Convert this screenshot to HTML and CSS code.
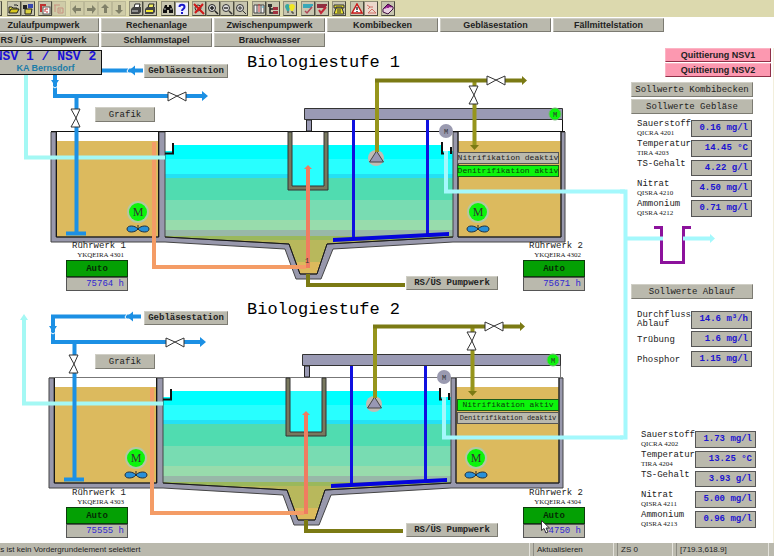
FILE: index.html
```html
<!DOCTYPE html>
<html lang="de">
<head>
<meta charset="utf-8">
<title>KA Bernsdorf – Biologie</title>
<link rel="stylesheet" href="styles.css">
</head>
<body>
<header class="toolbar">
  <div class="group"><button class="tool" aria-label="Neu"></button></div>
  <div class="group">
    <button class="tool" aria-label="Öffnen"><svg viewBox="0 0 12 12"><path d="M1 10V4h3l1 1h4v2" fill="#e8e040" stroke="#222"/><path d="M1 10l2-4h8l-2 4z" fill="#d8c820" stroke="#222"/><path d="M6 2h3l1 1" fill="none" stroke="#222"/></svg></button>
    <button class="tool" aria-label="Bild wählen"><svg viewBox="0 0 12 12"><rect x="1" y="2" width="4" height="4" fill="#222"/><rect x="6" y="1" width="5" height="4" fill="#3848b0"/><path d="M3 6h7l-1 5H3z" fill="#d8d040" stroke="#222"/></svg></button>
  </div>
  <div class="group">
    <button class="tool" aria-label="Ebene"><svg viewBox="0 0 12 12"><path d="M1 1h6v2H3v6H1z" fill="#c03030"/><rect x="4" y="4" width="7" height="7" fill="#fff" stroke="#555"/><path d="M6 9V6h3M8 10V8" fill="none" stroke="#c03030"/></svg></button>
    <button class="tool flat" aria-label="Ebene zurück"><svg viewBox="0 0 12 12"><path d="M1 2h6M2 2v7M5 5h5v5H5zM7 6v3" fill="none" stroke="#c89080"/></svg></button>
  </div>
  <div class="group">
    <button class="tool flat" aria-label="Links"><svg viewBox="0 0 12 12"><path d="M1 6l4-4v3h5v3H5v3z" fill="#808068"/></svg></button>
    <button class="tool flat" aria-label="Rechts"><svg viewBox="0 0 12 12"><path d="M11 6L7 2v3H2v3h5v3z" fill="#808068"/></svg></button>
    <button class="tool flat" aria-label="Hoch"><svg viewBox="0 0 12 12"><path d="M6 1l4 4H8v5H5V5H2z" fill="#808068"/></svg></button>
    <button class="tool flat" aria-label="Runter"><svg viewBox="0 0 12 12"><path d="M6 11l4-4H8V2H5v5H2z" fill="#808068"/></svg></button>
  </div>
  <div class="group">
    <button class="tool" aria-label="Drucken"><svg viewBox="0 0 12 12"><path d="M4 5l1-4h5L9 5z" fill="#fff" stroke="#222"/><path d="M1 6l2-2h8v5l-2 2H1z" fill="#444"/><path d="M2 8h6" stroke="#ddd"/></svg></button>
    <button class="tool" aria-label="Farbdruck"><svg viewBox="0 0 12 12"><path d="M4 5l1-4h5L9 5z" fill="#f4f060" stroke="#222"/><path d="M1 6l2-2h8v5l-2 2H1z" fill="#444"/><path d="M2 8h7" stroke="#f0e830" stroke-width="2"/></svg></button>
  </div>
  <div class="group">
    <button class="tool" aria-label="Suchen"><svg viewBox="0 0 12 12"><path d="M3 2h2v2h2V2h2l2 5v3H7V7H5v3H1V7z" fill="#111"/><path d="M3 5v2M9 5v2" stroke="#ccc"/></svg></button>
    <button class="tool" aria-label="Hilfe"><svg viewBox="0 0 12 12"><path d="M0 0h12v12H0z" fill="#eef"/><path d="M3.500 4c0-3 5-3 5 0 0 2-2.500 2-2.500 4M6 9v2" fill="none" stroke="#1818c8" stroke-width="2"/></svg></button>
  </div>
  <div class="group">
    <button class="tool" aria-label="Zoom aus"><svg viewBox="0 0 12 12"><circle cx="5" cy="5" r="3" fill="none" stroke="#333"/><path d="M1 1l10 10M10 1L2 10" stroke="#d01818" stroke-width="2"/></svg></button>
    <button class="tool" aria-label="Vergrößern"><svg viewBox="0 0 12 12"><circle cx="5" cy="5" r="3.500" fill="#ddd" stroke="#222"/><path d="M3 5h4M5 3v4M8 8l3 3" stroke="#222" stroke-width="1.500"/></svg></button>
    <button class="tool" aria-label="Verkleinern"><svg viewBox="0 0 12 12"><circle cx="5" cy="5" r="3.500" fill="#ddd" stroke="#333"/><path d="M3 5h4M8 8l3 3" stroke="#333" stroke-width="1.500"/></svg></button>
    <button class="tool" aria-label="Einpassen"><svg viewBox="0 0 12 12"><circle cx="5" cy="5" r="3.500" fill="#ddd" stroke="#333"/><path d="M4 4h2v2H4zM8 8l3 3" fill="none" stroke="#333"/></svg></button>
  </div>
  <div class="group">
    <button class="tool" aria-label="Fenster"><svg viewBox="0 0 12 12"><path d="M1 2h10v8H1zM4 2v8M8 2v8" fill="#f4f4f4" stroke="#444"/><path d="M6 1v8" stroke="#c03030"/><path d="M9 4h2" stroke="#38a0b0"/></svg></button>
    <button class="tool" aria-label="Baum"><svg viewBox="0 0 12 12"><path d="M3 1v9h4M3 6h4" fill="none" stroke="#222" stroke-width="1.500"/><path d="M1 1h4v3H1z" fill="#333"/><path d="M6 4h5v3H6zM6 8h5v3H6z" fill="#a03040"/></svg></button>
  </div>
  <div class="group">
    <button class="tool" aria-label="Lampen"><svg viewBox="0 0 12 12"><path d="M1 4c0-4 5-4 5 0L5 8H3z" fill="#38a8a0"/><path d="M5 4c0-4 6-4 6 0L9 8H7z" fill="#f0e820"/><path d="M3 9h2M7 9h2v2" stroke="#333" fill="none"/></svg></button>
  </div>
  <div class="group">
    <button class="tool" aria-label="Liste prüfen"><svg viewBox="0 0 12 12"><path d="M1 2h10M1 4h9" stroke="#38a8b8" stroke-width="2"/><path d="M3 8l2 2 5-6" fill="none" stroke="#b04858" stroke-width="1.500"/></svg></button>
    <button class="tool" aria-label="Alarm quittieren"><svg viewBox="0 0 12 12"><path d="M1 2h10M1 4h9" stroke="#903040" stroke-width="2"/><path d="M3 7l2 3 5-6" fill="none" stroke="#c02838" stroke-width="2"/></svg></button>
  </div>
  <div class="group">
    <button class="tool" aria-label="Telefon"><svg viewBox="0 0 12 12"><path d="M1 2h10v3H9V4H3v1H1z" fill="#e8e030" stroke="#333"/><path d="M3 5h6l2 6H1z" fill="#e8e030" stroke="#333"/><path d="M4 7h4M4 9h4" stroke="#333"/></svg></button>
  </div>
  <div class="group">
    <button class="tool" aria-label="Warnung"><svg viewBox="0 0 12 12"><path d="M6 1l5 9H1z" fill="#fff" stroke="#c81818" stroke-width="1.500"/><path d="M6 4v3M6 8v1" stroke="#333" stroke-width="1.500"/></svg></button>
    <button class="tool pale" aria-label="Kurve"><svg viewBox="0 0 12 12"><path d="M2 2l3 2-2 2M5 4h3M3 10l4-4 4 4z" fill="none" stroke="#d07068"/></svg></button>
  </div>
  <div class="group">
    <button class="tool" aria-label="Handbuch"><svg viewBox="0 0 12 12"><path d="M1 6l5-5 5 3-5 6z" fill="#90208c" stroke="#401040"/><path d="M1 6v3l5 2 5-5V4" fill="#e8d0e0" stroke="#401040"/><path d="M4 5l3 1 1-2" stroke="#f0c0e0" fill="none"/></svg></button>
  </div>
</header>

<nav class="areas">
  <button>Zulaufpumpwerk</button>
  <button>Rechenanlage</button>
  <button>Zwischenpumpwerk</button>
  <button>Kombibecken</button>
  <button>Gebläsestation</button>
  <button>Fällmittelstation</button>
  <button>RS / ÜS - Pumpwerk</button>
  <button>Schlammstapel</button>
  <button>Brauchwasser</button>
</nav>

<main class="plant">
  <svg class="piping" width="630" height="495" viewBox="0 48 630 495" aria-hidden="true">
    <defs>
      <clipPath id="basin"><path d="M165 151h8v-6h269v6h11v86l-126 7-10 30h-17l-11-30-124-7z"/></clipPath>
      <g id="valve"><path d="M-9-4v9L0 0zM9-4v9L0 0z" fill="#fff" stroke="#333"/></g>
      <g id="mixer">
        <circle r="11" fill="#b4c8a0"/><circle r="9" fill="#0cf40c"/>
        <text y="4" class="motor-big">M</text>
        <path d="M0 13v4" stroke="#222"/>
        <path d="M0 17c-3-4-11-4-11 0s8 4 11 0c3-4 11-4 11 0s-8 4-11 0z" fill="#2890d8" stroke="#1c3040"/>
      </g>
      <g id="stage">
        <path d="M57 141h102v96H57zM458 141h103v96H458z" fill="#dcba5e"/>
        <g clip-path="url(#basin)">
          <path d="M160 145h300v14H160z" fill="#00ffff"/>
          <path d="M160 159h300v16H160z" fill="#28ffff"/>
          <path d="M160 174h300v4H160z" fill="#24e0f4"/>
          <path d="M160 178h300v22H160z" fill="#50dcb0"/>
          <path d="M160 200h300v20H160z" fill="#78dcb2"/>
          <path d="M160 220h300v10H160z" fill="#98dcac"/>
          <path d="M160 230h300v6H160z" fill="#98b8a8"/>
          <path d="M160 236h300v4H160z" fill="#9ab85c"/>
          <path d="M160 240h300v22H160z" fill="#b8b85c"/>
          <path d="M160 262h300v14H160z" fill="#dcba5c"/>
        </g>
        <!-- concrete -->
        <path d="M51 132h5v105h103V132h6v105l124 7 11 30h17l10-30 126-7V132h5v105h103V132h4v110H453l-120 7-12 30h-25l-11-30-120-7H51z" fill="#9898ac" stroke="#444"/>
        <path d="M56.500 132v105h102V132M165 237l124 7 11 30h17l10-30 126-7M458 132v105h103V132" fill="none" stroke="#181818"/>
        <path d="M51 131.500h514" stroke="currentColor"/>
        <path d="M165 153.500h8V143M442 142v11.500h3M451 147v7" fill="none" stroke="#111" stroke-width="2"/>
        <!-- inlet shaft -->
        <path d="M292 132h32v13h-32z" fill="#fff"/><path d="M292 145h32v41h-32z" fill="#28ffff"/>
        <path d="M288 132v58h40v-58h-4v54h-32v-54z" fill="#78785e" stroke="#333"/>
        <!-- scraper bridge -->
        <path d="M306.500 120h5v11h-5z" fill="#9a9ab4" stroke="#222"/><path d="M562.500 119v13" stroke="currentColor"/>
        <path d="M304.500 108.500h258v11h-258z" fill="#9a9ab4" stroke="#333"/>
        <path d="M353.500 120v118M427.500 120v115" stroke="#1010e0" stroke-width="3"/>
        <path d="M333 238l20-1 96-5v4l-96 5-20 1z" fill="#0404dc"/>
        <circle cx="555" cy="114" r="6" fill="#0cf40c" stroke="#70b870"/><text x="555" y="117" class="motor">M</text>
        <circle cx="446" cy="131" r="7" fill="#9a9ab0"/><text x="446" y="134" class="motor">M</text>
        <!-- sludge -->
        <path d="M154 142v125h152" fill="none" stroke="#f49c66" stroke-width="4"/>
        <path d="M308 268v-99" stroke="#f07c60" stroke-width="4"/><path d="M304 169l4-4 4 4z" fill="#f07c60"/>
        <path d="M308 274v11h97" fill="none" stroke="#7b7a14" stroke-width="4"/>
        <!-- drain lines -->
        <path d="M165 157.500H26V74" fill="none" stroke="#a4f8f4" stroke-width="4"/><path d="M22 74l4-6 4 6z" fill="#a4f8f4"/>
        <path d="M446 151v40.500h179" fill="none" stroke="#a4f8fc" stroke-width="4"/>
        <!-- surplus air -->
        <circle cx="376" cy="158" r="8" fill="#c0bcb4"/><path d="M376.500 151l-7 11h14z" fill="#9898b4" stroke="#444"/>
        <path d="M377 80v72M474.500 80v66" stroke="#96951c" stroke-width="4"/><path d="M375 80.500h147" stroke="#7b7a14" stroke-width="4"/>
        <path d="M522 76l5 4.500-5 4.500zM470 145h9l-4.500 5z" fill="#7b7a14"/>
        <path d="M487 78h18v5h-18zM472 86h5v18h-5z" fill="#fff"/>
        <use href="#valve" x="496" y="80"/><use href="#valve" transform="translate(474 95) rotate(90)"/>
        <!-- process air -->
        <path d="M143 70.500H55V96h148M76.500 96v137" fill="none" stroke="#1c90e4" stroke-width="4"/>
        <path d="M66 231.500h20v4H66zM129 70.500l6-5v10zM51 80h8l-4 6zM202 91l6 5-6 5z" fill="#1c90e4"/>
        <path d="M129 68l-2 3 2 3M52 86l3 2 3-2" fill="none" stroke="#fff"/>
        <path d="M168 93h17v6h-17zM74 109h6v17h-6z" fill="#fff"/>
        <use href="#valve" x="177" y="96"/><use href="#valve" transform="translate(76 118) rotate(90)"/>
        <use href="#mixer" x="138" y="212"/><use href="#mixer" x="478" y="212"/>
      </g>
    </defs>
    <use href="#stage" class="first"/>
    <use href="#stage" class="second" transform="translate(-2 246)"/>
    <text x="307" y="263" class="motor">1</text>
    <path d="M654 227.500h7.500v35h22v-35h7.500" fill="none" stroke="#8c129c" stroke-width="3"/>
    <path d="M620 437.500h5.500v-246H620M625 238.500h38M683 238.500h28" fill="none" stroke="#a4f8fc" stroke-width="4"/>
    <path d="M710 234l5 4.500-5 4.500z" fill="#a4f8fc"/>
  </svg>

  <div class="stages">
    <section class="stage">
      <button class="home"><strong>NSV 1 / NSV 2</strong><span>KA Bernsdorf</span></button>
      <h1>Biologiestufe 1</h1>
      <button class="key bold blower">Gebläsestation</button>
      <button class="key chart">Grafik</button>
      <div class="modes"><span class="mode">Nitrifikation deaktiv</span><span class="mode on">Denitrifikation aktiv</span></div>
      <div class="drive left"><span class="name">Rührwerk 1</span><span class="tag">YKQEIRA 4301</span><button>Auto</button><output>75764 h</output></div>
      <div class="drive right"><span class="name">Rührwerk 2</span><span class="tag">YKQEIRA 4302</span><button>Auto</button><output>75671 h</output></div>
      <button class="key bold pump">RS/ÜS Pumpwerk</button>
    </section>
    <section class="stage">
      <h1>Biologiestufe 2</h1>
      <button class="key bold blower">Gebläsestation</button>
      <button class="key chart">Grafik</button>
      <div class="modes"><span class="mode on">Nitrifikation aktiv</span><span class="mode long">Denitrifikation deaktiv</span></div>
      <div class="drive left"><span class="name">Rührwerk 1</span><span class="tag">YKQEIRA 4303</span><button>Auto</button><output>75555 h</output></div>
      <div class="drive right"><span class="name">Rührwerk 2</span><span class="tag">YKQEIRA 4304</span><button>Auto</button><output>74750 h</output></div>
      <button class="key bold pump">RS/ÜS Pumpwerk</button>
      <svg class="pointer" width="9" height="14" viewBox="0 0 9 14" aria-hidden="true"><path d="M.5.500v10l2.500-2 2 4.500 2-1-2-4h3.500z" fill="#fff" stroke="#333"/></svg>
    </section>
  </div>

  <aside class="panel">
    <div class="acks"><button>Quittierung NSV1</button><button>Quittierung NSV2</button></div>
    <div class="setpoints"><button class="key">Sollwerte Kombibecken</button><button class="key">Sollwerte Gebläse</button></div>
    <dl class="readings">
      <div><dt>Sauerstoff<small>QICRA 4201</small></dt><dd>0.16 mg/l</dd></div>
      <div><dt>Temperatur<small>TIRA 4203</small></dt><dd>14.45 °C</dd></div>
      <div><dt>TS-Gehalt</dt><dd>4.22 g/l</dd></div>
      <div><dt>Nitrat<small>QISRA 4210</small></dt><dd>4.50 mg/l</dd></div>
      <div><dt>Ammonium<small>QISRA 4212</small></dt><dd>0.71 mg/l</dd></div>
    </dl>
    <div class="setpoints outlet"><button class="key">Sollwerte Ablauf</button></div>
    <dl class="readings flow">
      <div><dt>Durchfluss<br>Ablauf</dt><dd>14.6 m³/h</dd></div>
      <div class="low"><dt>Trübung</dt><dd>1.6 mg/l</dd></div>
      <div class="low"><dt>Phosphor</dt><dd>1.15 mg/l</dd></div>
    </dl>
    <dl class="readings second-stage">
      <div><dt>Sauerstoff<small>QICRA 4202</small></dt><dd>1.73 mg/l</dd></div>
      <div><dt>Temperatur<small>TIRA 4204</small></dt><dd>13.25 °C</dd></div>
      <div><dt>TS-Gehalt</dt><dd>3.93 g/l</dd></div>
      <div><dt>Nitrat<small>QISRA 4211</small></dt><dd>5.00 mg/l</dd></div>
      <div><dt>Ammonium<small>QISRA 4213</small></dt><dd>0.96 mg/l</dd></div>
    </dl>
  </aside>
</main>

<footer class="status">
  <span class="message">Es ist kein Vordergrundelement selektiert</span>
  <span class="cell update">Aktualisieren</span>
  <span class="cell zs">ZS 0</span>
  <span class="cell coords">[719.3,618.9]</span>
</footer>
</body>
</html>
```
FILE: styles.css
```css
* { box-sizing: border-box; }

body {
  margin: 0;
  min-height: 100vh;
  display: flex;
  flex-direction: column;
  overflow: hidden;
  background: #fff;
  color: #222;
  font: 9px/10px "Liberation Sans", sans-serif;
}

button {
  margin: 0;
  padding: 0;
  font: inherit;
  color: inherit;
  white-space: nowrap;
}

/* toolbar */
.toolbar {
  display: flex;
  gap: 3px;
  height: 17px;
  padding: 1px 0;
  background: #dcd9ae;
}
.group { display: flex; }
.group:nth-child(odd) { margin-right: 1px; }
.group:first-child { margin: 0 2px 0 -12px; }
.tool {
  width: 14px;
  height: 15px;
  background: #c8c6b0;
  border: 1px solid;
  border-color: #908e78 #4c4c40 #4c4c40 #908e78;
}
.tool.flat { background: #cfcca8; border-color: #bcb998; }
.tool.pale { background: #ecd8cc; }
.tool svg { display: block; width: 12px; height: 12px; }

/* area navigation */
.areas {
  display: grid;
  grid-template-columns: repeat(6, 111px);
  grid-auto-rows: 14px;
  gap: 1px 2px;
  margin: 1px 0 0 -12px;
  font-weight: bold;
}
.areas button,
.key {
  background: #bab9ad;
  border: 1px solid;
  border-color: #d0cfc6 #7c7b72 #7c7b72 #d0cfc6;
}

/* process picture */
.plant {
  flex: 1;
  display: flex;
  justify-content: space-between;
  position: relative;
  margin-top: 1px;
  border-right: 1px solid #f2efdc;
}
.piping {
  position: absolute;
  left: 0;
  top: 0;
  overflow: visible;
}
.first { color: #111; }
.second { color: #777; }
.motor,
.motor-big {
  font: 7px "Liberation Mono", monospace;
  text-anchor: middle;
  fill: #333;
}
.motor-big { font: 12px "Liberation Serif", serif; }

.stages { flex: 1; }
.stage {
  position: relative;
  height: 247px;
  font-family: "Liberation Mono", monospace;
}
.stage > * { position: absolute; }
.stage h1 {
  left: 247px;
  top: 5px;
  margin: 0;
  font-size: 17px;
  line-height: 20px;
  font-weight: normal;
  color: #000;
}
.home {
  left: -11px;
  top: 2px;
  width: 113px;
  height: 25px;
  display: flex;
  flex-direction: column;
  align-items: center;
  background: #bab9ad;
  border: 1px solid #111;
}
.home strong { font-size: 13px; line-height: 12px; color: #1c10d8; }
.home span { font: bold 9px/11px "Liberation Sans", sans-serif; color: #1c7ca8; }
.bold { font-weight: bold; }
.blower { left: 144px; top: 16px; width: 84px; height: 14px; }
.chart { left: 95px; top: 59px; width: 60px; height: 15px; }
.pump { left: 406px; top: 228px; width: 92px; height: 14px; }

.modes {
  left: 457px;
  top: 104px;
  width: 102px;
  display: flex;
  flex-direction: column;
  gap: 1px;
}
.mode {
  display: flex;
  justify-content: center;
  height: 12px;
  white-space: nowrap;
  font-size: 8px;
  background: #bab9ad;
  border: 1px solid #555;
}
.mode.on { background: #0cf40c; border-color: #1c5c1c; color: #0c400c; }
.mode.long { font-size: 7px; }

.drive {
  top: 193px;
  width: 62px;
  display: flex;
  flex-direction: column;
  align-items: stretch;
}
.drive.left { left: 66px; }
.drive.right { left: 523px; }
.name { text-align: right; padding-right: 2px; white-space: nowrap; }
.tag {
  font: 7px/9px "Liberation Serif", serif;
  text-align: right;
  padding-right: 4px;
}
.drive button {
  height: 17px;
  background: #04a004;
  border: 1px solid #0c3c0c;
  color: #042c04;
  font-weight: bold;
}
.drive output {
  height: 14px;
  padding: 1px 3px;
  text-align: right;
  background: #bab9ad;
  border: 1px solid #555;
  color: #3028d0;
}
.pointer { left: 541px; top: 225px; }

/* measurements */
.panel {
  position: relative;
  width: 143px;
  display: flex;
  flex-direction: column;
  font-family: "Liberation Mono", monospace;
}
.acks {
  display: grid;
  grid-auto-rows: 14px;
  gap: 1px;
  margin: 0 2px 0 35px;
  font: bold 9px/10px "Liberation Sans", sans-serif;
}
.acks button {
  background: #fc98b0;
  border: 1px solid;
  border-color: #fcb4c4 #903048 #903048 #fcb4c4;
}
.setpoints {
  display: grid;
  grid-auto-rows: 15px;
  gap: 2px;
  margin: 5px 20px 0 1px;
}
.setpoints.outlet { margin-top: 69px; }
.readings {
  display: grid;
  gap: 5px;
  margin: 6px 0 0 7px;
}
.readings.flow { margin-top: 12px; }
.readings.second-stage { margin: 65px 0 0 11px; }
.readings div {
  display: grid;
  grid-template-columns: 54px 61px;
  height: 15px;
}
.readings dt { line-height: 9px; }
.readings small {
  display: block;
  font: 7px/8px "Liberation Serif", serif;
}
.readings .low dt { padding-top: 5px; }
.readings dd {
  margin: 0;
  padding: 2px 3px;
  text-align: right;
  white-space: nowrap;
  font-weight: bold;
  color: #1c14d0;
  background: #bab9ad;
  border: 1px solid #555;
}

/* status bar */
.status {
  display: flex;
  height: 13px;
  padding-right: 5px;
  background: #bab9ad;
  font-size: 8px;
  line-height: 13px;
  white-space: nowrap;
}
.message { flex: 1; margin-left: -5px; border-right: 1px solid #e4e3dc; }
.cell {
  margin-left: 3px;
  padding-left: 3px;
  border-left: 1px solid #8c8b82;
  border-right: 1px solid #e4e3dc;
}
.update { width: 81px; }
.zs { width: 56px; }
.coords { width: 93px; }
```
